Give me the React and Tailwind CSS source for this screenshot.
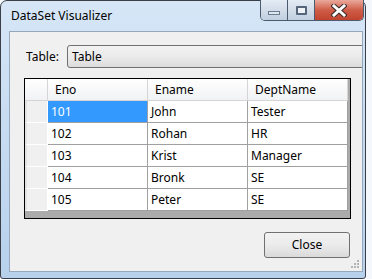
const rows = [
  ['101', 'John', 'Tester'],
  ['102', 'Rohan', 'HR'],
  ['103', 'Krist', 'Manager'],
  ['104', 'Bronk', 'SE'],
  ['105', 'Peter', 'SE'],
];

function CaptionButtons() {
  return (
    <div className="flex -mt-[1px] -mr-[1px] h-[21px] rounded-b-[5px] border border-t-0 border-[#4b5a6e] overflow-hidden">
      <div className="w-[27px] h-full bg-gradient-to-b from-[#e4ebf4] via-[#d3dde9] to-[#c0cee0] border-r border-[#4b5a6e] flex items-end justify-center pb-[5px]">
        <div className="w-[12px] h-[4px] bg-[#dfe6ef] border border-[#6b7a8e]" />
      </div>
      <div className="w-[27px] h-full bg-gradient-to-b from-[#e4ebf4] via-[#d3dde9] to-[#c0cee0] border-r border-[#4b5a6e] flex items-center justify-center">
        <div className="w-[11px] h-[9px] border-2 border-[#55657a] bg-[#eef2f7] rounded-[1px]" />
      </div>
      <div className="w-[48px] h-full bg-gradient-to-b from-[#e9a99c] via-[#cf5d48] to-[#c0432f] flex items-center justify-center">
        <svg width="16" height="13" viewBox="0 0 16 13">
          <path d="M3 2 L13 11 M13 2 L3 11" stroke="#3a2a2a" strokeWidth="5" strokeLinecap="square" />
          <path d="M3 2 L13 11 M13 2 L3 11" stroke="#ffffff" strokeWidth="3" strokeLinecap="square" />
        </svg>
      </div>
    </div>
  );
}

export default function App() {
  return (
    <div className="w-[372px] h-[279px] bg-[#f4f7fb] overflow-hidden font-['Noto_Sans',sans-serif] text-[12px] text-black">
      <div className="w-[366px] h-[279px] rounded-t-[7px] rounded-b-[3px] border border-[#3a3f47] bg-gradient-to-b from-[#d6e6f7] via-[#c6dbf1] to-[#b7d1ec] flex flex-col pl-[8px] pr-[2px] pb-[6px]">
        {/* Title bar */}
        <div className="h-[30px] shrink-0 flex justify-between items-start">
          <span className="pt-[7px] pl-[2px] leading-[16px]">DataSet Visualizer</span>
          <CaptionButtons />
        </div>

        {/* Client area */}
        <div className="relative flex-1 flex flex-col border border-[#98a8bc] bg-[#f0f0f0] overflow-hidden">
          <div className="mt-[13px] h-[23px] flex items-center shrink-0">
            <span className="w-[57px] pl-[16px] shrink-0">Table:</span>
            <div className="w-[320px] h-[23px] shrink-0 rounded-[3px] border border-[#707070] bg-gradient-to-b from-[#f2f2f2] via-[#ebebeb] to-[#dcdcdc] flex items-center pl-[4px]">
              Table
            </div>
          </div>

          {/* Grid */}
          <div className="mt-[10px] ml-[14px] w-[327px] h-[141px] shrink-0 border border-black bg-[#ababab] flex flex-col">
            <div className="flex h-[22px] shrink-0">
              <div className="w-[23px] h-full bg-gradient-to-b from-[#ffffff] to-[#f1f2f4] border-r border-b border-[#d5d5d5]" />
              {['Eno', 'Ename', 'DeptName'].map(h => (
                <div key={h} className="w-[100px] h-full bg-gradient-to-b from-[#ffffff] to-[#f1f2f4] border-r border-b border-[#d5d5d5] pl-[7px] flex items-center">
                  {h}
                </div>
              ))}
            </div>
            {rows.map((r, i) => (
              <div key={r[0]} className="flex h-[22px] shrink-0">
                <div className="w-[23px] h-full bg-[#f0f0f0] border-l-[2px] border-l-[#e2e2e2] border-r border-b border-r-[#ffffff] border-b-[#ffffff]" />
                {r.map((c, j) => (
                  <div
                    key={j}
                    className={`w-[100px] h-full border-r border-b border-[#a0a0a0] pl-[3px] flex items-center ${i === 0 && j === 0 ? 'bg-[#3399ff] text-white' : 'bg-white'}`}
                  >
                    {c}
                  </div>
                ))}
              </div>
            ))}
          </div>

          <div className="mt-[13px] mr-[12px] self-end shrink-0">
            <button className="w-[86px] h-[26px] rounded-[3px] border border-[#707070] bg-gradient-to-b from-[#f2f2f2] via-[#ebebeb] to-[#dadada] flex items-center justify-center">
              Close
            </button>
          </div>

          <svg className="absolute right-[2px] bottom-[2px]" width="10" height="10" viewBox="0 0 10 10">
            <rect x="7" y="1" width="2" height="2" fill="#b5b5b5" />
            <rect x="4" y="4" width="2" height="2" fill="#b5b5b5" />
            <rect x="7" y="4" width="2" height="2" fill="#b5b5b5" />
            <rect x="1" y="7" width="2" height="2" fill="#b5b5b5" />
            <rect x="4" y="7" width="2" height="2" fill="#b5b5b5" />
            <rect x="7" y="7" width="2" height="2" fill="#b5b5b5" />
          </svg>
        </div>
      </div>
    </div>
  );
}
